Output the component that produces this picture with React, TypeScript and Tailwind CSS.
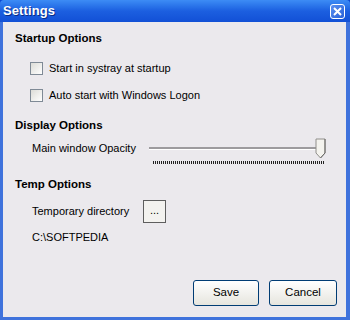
import React from "react";

const font = { fontFamily: '"Liberation Sans", Arial, sans-serif' };

function Checkbox() {
  return (
    <div className="w-[13px] h-[13px] border border-[#7f8a96] bg-gradient-to-br from-[#dcdcd7] to-white shrink-0" />
  );
}

function XpButton({ children, className }: { children: React.ReactNode; className: string }) {
  return (
    <div
      className={
        "flex items-center justify-center rounded-[3px] border border-[#003c74] bg-gradient-to-b from-white to-[#e6e5de] text-[11.5px] text-black " +
        className
      }
    >
      {children}
    </div>
  );
}

export default function App() {
  return (
    <div className="w-[350px] h-[320px] flex flex-col bg-[#0a46d2] overflow-hidden" style={font}>
      {/* Title bar */}
      <div className="relative h-[22px] shrink-0 flex items-center justify-between pl-[3px] pr-[5px] bg-gradient-to-b from-[#3d8cf5] via-[#1c5fe0] to-[#1250d6] rounded-t-[4px]">
        <span className="text-white font-bold text-[13px] tracking-[0.1px]" style={{ textShadow: "1px 1px 0 #0a2c84" }}>
          Settings
        </span>
        <div className="w-[15px] h-[15px] rounded-[3px] border border-white bg-gradient-to-br from-[#5a90f0] to-[#2860d8] flex items-center justify-center">
          <svg width="9" height="9" viewBox="0 0 9 9">
            <path d="M1 1 L8 8 M8 1 L1 8" stroke="white" strokeWidth="2" />
          </svg>
        </div>
      </div>

      {/* Body */}
      <div className="flex-1 flex border-l-[3px] border-r-[4px] border-b-[3px] border-[#3f72dc]">
        <div className="flex-1 flex flex-col bg-[#ebe9ed] pl-[12px] pt-[9px] text-[11px] text-black">
          <div className="font-bold text-[11.5px] h-[15px] leading-[15px]">Startup Options</div>
          <div className="pl-[15px] mt-[16px] flex flex-col gap-[14px]">
            <div className="flex items-center gap-[6px] h-[13px]">
              <Checkbox />
              <span>Start in systray at startup</span>
            </div>
            <div className="flex items-center gap-[6px] h-[13px]">
              <Checkbox />
              <span>Auto start with Windows Logon</span>
            </div>
          </div>

          <div className="font-bold text-[11.5px] h-[15px] leading-[15px] mt-[16px]">Display Options</div>
          <div className="pl-[17px] mt-[4px] flex items-start">
            <span className="w-[114px] mt-[4px] h-[15px] leading-[15px]">Main window Opacity</span>
            <div className="relative w-[182px] h-[28px]">
              <div className="absolute left-[3px] top-[10px] w-[176px] h-[3px] bg-[#9d9b9e] border-b border-white" />
              <svg className="absolute left-[169px] top-[1px]" width="12" height="22" viewBox="0 0 12 22">
                <path d="M1 1 H10 V15 L5.5 20 L1 15 Z" fill="#f4f3ee" stroke="#8f8e8a" strokeWidth="1" />
                <path d="M10 1 V15 L5.5 20" fill="none" stroke="#6a6966" strokeWidth="1" />
              </svg>
              <svg className="absolute left-[7px] top-[24px]" width="172" height="3" viewBox="0 0 172 3">
                <defs>
                  <pattern id="tk" width="2" height="3" patternUnits="userSpaceOnUse">
                    <rect x="0" y="0" width="1" height="3" fill="#222" />
                  </pattern>
                </defs>
                <rect x="0" y="0" width="172" height="3" fill="url(#tk)" />
              </svg>
            </div>
          </div>

          <div className="font-bold text-[11.5px] h-[15px] leading-[15px] mt-[12px]">Temp Options</div>
          <div className="pl-[17px] mt-[8px] flex items-center">
            <span className="w-[111px]">Temporary directory</span>
            <div className="w-[23px] h-[23px] border border-[#5e5e5e] bg-[#f3f2ef] flex items-center justify-center text-[11px] leading-none pb-[3px]">
              ...
            </div>
          </div>
          <div className="pl-[17px] mt-[7px] h-[15px] leading-[15px]">C:\SOFTPEDIA</div>

          <div className="flex-1" />
          <div className="flex justify-end gap-[10px] pr-[9px] pb-[11px]">
            <XpButton className="w-[66px] h-[26px]">Save</XpButton>
            <XpButton className="w-[68px] h-[26px]">Cancel</XpButton>
          </div>
        </div>
      </div>
    </div>
  );
}
